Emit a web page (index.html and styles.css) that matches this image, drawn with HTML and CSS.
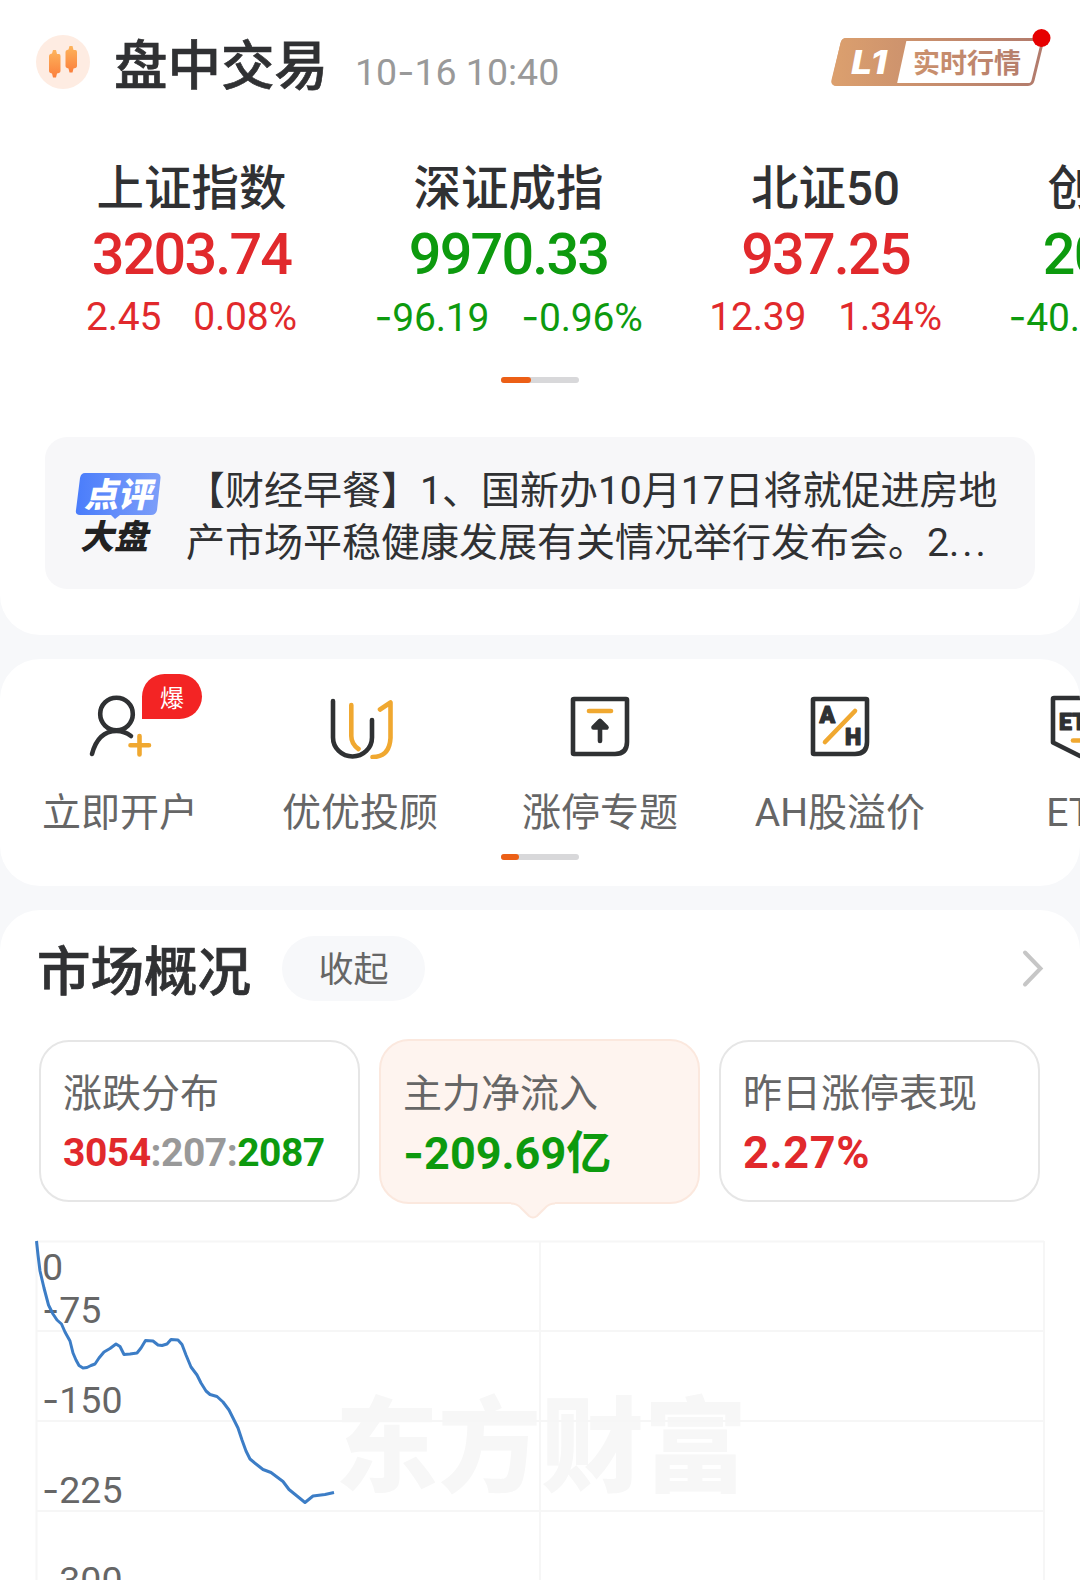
FILE: index.html
```
<!DOCTYPE html>
<html lang="zh-CN">
<head>
  <meta charset="UTF-8">
  <title>盘中交易</title>
  <link rel="stylesheet" href="styles.css">
</head>
<body>

  <section class="panel panel-top">
    <header class="header">
      <svg class="logo" width="54" height="54" viewBox="0 0 54 54">
        <defs>
          <linearGradient id="candle" x1="0" y1="0" x2="0" y2="1">
            <stop offset="0" stop-color="#fdb45c"/>
            <stop offset="1" stop-color="#fb7f3c"/>
          </linearGradient>
        </defs>
        <circle cx="27" cy="27" r="27" fill="#feece2"/>
        <path d="M17 15h3l1 4h2q1.500 0 1.500 2v15q0 1.500-1.500 2l-2 .5-1 4h-3l-1-4-1.500-.5q-1.500-.5-1.500-2v-15q0-1.500 1.500-2l1.500-.5z" fill="url(#candle)"/>
        <path d="M33.500 11h3l1 4h2q1.500 0 1.500 2v14q0 1.500-1.500 2l-2 .5-1 4h-3l-1-4-1.500-.5q-1.500-.5-1.500-2v-14q0-1.500 1.500-2l1.500-.5z" fill="url(#candle)"/>
      </svg>
      <h1>盘中交易</h1>
      <span class="time">10<i class="neg">-</i>16 10:40</span>
      <svg class="level" width="224" height="66" viewBox="0 0 224 66">
        <defs>
          <linearGradient id="copper" gradientUnits="userSpaceOnUse" x1="0" y1="0" x2="214" y2="0">
            <stop offset="0" stop-color="#dca06e"/>
            <stop offset="1" stop-color="#b17a6c"/>
          </linearGradient>
        </defs>
        <path d="M15 18.500H208q4 0 3 4L202 59.500q-1 4-5 4H6q-5 0-4-4.500L11 22.500q1-4 5-4z" fill="none" stroke="url(#copper)" stroke-width="3"/>
        <path d="M15 17H76L65.500 65H6q-6.500 0-5-6L9.500 22q1-5 5.500-5z" fill="url(#copper)"/>
        <text class="l1" x="20" y="53" textLength="36" lengthAdjust="spacingAndGlyphs">L1</text>
        <text class="l1-name" x="82" y="52" fill="url(#copper)">实时行情</text>
        <circle cx="210.500" cy="17" r="9" fill="#e60000"/>
      </svg>
    </header>

    <div class="indices">
      <div class="index up">
        <h2>上证指数</h2>
        <b>3203.74</b>
        <p><span>2.45</span><span>0.08%</span></p>
      </div>
      <div class="index down">
        <h2>深证成指</h2>
        <b>9970.33</b>
        <p><span><i class="neg">-</i>96.19</span><span><i class="neg">-</i>0.96%</span></p>
      </div>
      <div class="index up">
        <h2>北证50</h2>
        <b>937.25</b>
        <p><span>12.39</span><span>1.34%</span></p>
      </div>
      <div class="index down">
        <h2>创业板指</h2>
        <b>2060.15</b>
        <p><span><i class="neg">-</i>40.06</span><span><i class="neg">-</i>1.91%</span></p>
      </div>
    </div>
    <div class="pager"><i class="pager-wide"></i></div>

    <div class="news">
      <svg class="news-logo" width="86" height="86" viewBox="0 0 86 86">
        <defs>
          <linearGradient id="blue" x1="0" y1="0" x2="1" y2="0">
            <stop offset="0" stop-color="#4a7dfb"/>
            <stop offset="1" stop-color="#7d9ef9"/>
          </linearGradient>
        </defs>
        <path d="M10 1H80q6 0 5.500 5L82 38q-1 5-6 5H45l-5 4-4-4H5q-5 0-4-5L5 6q1-5 5-5z" fill="url(#blue)"/>
        <text transform="translate(9 35) skewX(-12)" fill="#fff">点评</text>
        <text transform="translate(5 77) skewX(-12)" fill="#222">大盘</text>
      </svg>
      <p>【财经早餐】1、国新办10月17日将就促进房地<br>产市场平稳健康发展有关情况举行发布会。2<span class="dots">...</span></p>
    </div>
  </section>

  <section class="panel panel-tools">
    <div class="tools">
      <div class="tool">
        <svg width="66" height="66" viewBox="0 0 66 66">
          <circle cx="29.500" cy="21" r="16.300"/>
          <path d="M5 61C9 46 17 38 29.500 38q8 0 14.500 5"/>
          <path class="gold" d="M52.500 43v18.500M43.500 52.300h18.500"/>
        </svg>
        <span class="hot">爆</span>
        <span>立即开户</span>
      </div>
      <div class="tool">
        <svg width="66" height="66" viewBox="0 0 66 66">
          <path d="M6 8V44.500a19.500 19 0 0 0 39 0V27"/>
          <path class="gold" d="M24.300 12V43q0 8 7.200 13M53 16.500L63.500 9.500V45q-1 19-18 19"/>
        </svg>
        <span>优优投顾</span>
      </div>
      <div class="tool">
        <svg width="66" height="66" viewBox="0 0 66 66">
          <path d="M7 6H59q1 0 1 1V49q0 12-12 12H7q-1 0-1-1V7q0-1 1-1z"/>
          <path class="gold" d="M22 18h22"/>
          <path d="M33 48V29"/>
          <path d="M26.500 34.500L33 28l6.500 6.500z" fill="#2f3133"/>
        </svg>
        <span>涨停专题</span>
      </div>
      <div class="tool">
        <svg width="66" height="66" viewBox="0 0 66 66">
          <path d="M7 6H59q1 0 1 1V49q0 12-12 12H7q-1 0-1-1V7q0-1 1-1z"/>
          <path class="gold" d="M18 49L48 18"/>
          <text x="12.500" y="30">A</text>
          <text x="38" y="52">H</text>
        </svg>
        <span>AH股溢价</span>
      </div>
      <div class="tool">
        <svg width="66" height="66" viewBox="0 0 66 66">
          <path d="M7 5H59q1 0 1 1V50L33 63 6 49.500V6q0-1 1-1z"/>
          <text x="12" y="37">ETF</text>
          <path class="gold" d="M26 47.500h15"/>
        </svg>
        <span>ETF</span>
      </div>
    </div>
    <div class="pager"><i class="pager-narrow"></i></div>
  </section>

  <section class="panel panel-market">
    <div class="market-head">
      <h1>市场概况</h1>
      <span class="fold">收起</span>
      <svg class="chevron" width="24" height="40" viewBox="0 0 24 40">
        <path d="M4 4.500L19.500 20.500 4 36.500" fill="none" stroke="#c6c6c6" stroke-width="4" stroke-linecap="round"/>
      </svg>
    </div>

    <div class="cards">
      <div class="card">
        <h3>涨跌分布</h3>
        <p class="ratio"><span class="up">3054</span>:207:<span class="down">2087</span></p>
      </div>
      <div class="card active">
        <h3>主力净流入</h3>
        <p class="down"><i class="neg">-</i>209.69亿</p>
        <svg class="tail" width="44" height="17" viewBox="0 0 44 17">
          <path d="M0 0h44v2q-6 0-10 4l-8 8q-4 3-8 0L10 6Q6 2 0 2z" fill="#fef4ef"/>
          <path d="M0 1.500q6 0 10 4.500l8 8q4 3 8 0l8-8q4-4.500 10-4.500" fill="none" stroke="#fbe8de" stroke-width="2"/>
        </svg>
      </div>
      <div class="card">
        <h3>昨日涨停表现</h3>
        <p class="up rate">2.27%</p>
      </div>
    </div>

    <svg class="chart" width="1080" height="370" viewBox="0 0 1080 370">
      <text class="watermark" x="335" y="274">东方财富</text>
      <path class="grid" d="M36 31.500H1044M36 121H1044M36 211H1044M36 301H1044M36.500 31V370M540 31V370M1044 31V370"/>
      <g class="axis">
        <text x="42" y="70">0</text>
        <text x="42" y="112.500"><tspan class="neg">-</tspan>75</text>
        <text x="42" y="202.500"><tspan class="neg">-</tspan>150</text>
        <text x="42" y="292.500"><tspan class="neg">-</tspan>225</text>
        <text x="42" y="383"><tspan class="neg">-</tspan>300</text>
      </g>
      <polyline class="flow" points="36.500,31 38,45 40,61 44,78 48.500,95 53,104 57,110 61.500,114 65,122 70,131 73,143 76,150 79,155.500 83,158 87,157.500 91,155.500 95,154 99,148 104,142 110,138.500 116,134 120,136.500 124,144.500 130,144 137,143 141,138 145.500,130.500 153,131 158,135 162,135.500 167,134 171,129.500 178,130 182,134.500 186,145 191,157 197,165 201,173 206,181 210,184.500 217,186.500 223,192 229,200 234,210 238,218 242,230 246,241 250,249 256,254 263,259.500 271,262.500 277,267 283,271.500 289,279.500 297,286 305,292.500 313,286 325,284.500 334,282.500"/>
    </svg>
  </section>

</body>
</html>
```
FILE: styles.css
```
* {
  box-sizing: border-box;
  margin: 0;
  padding: 0;
}
body {
  width: 1080px;
  height: 1580px;
  overflow: hidden;
  background: #f7f8fa;
  color: #303133;
  font-family: Roboto, "Noto Sans CJK SC", sans-serif;
}
i { font-style: normal; }
svg { display: block; }
h1, h2, h3 { font-weight: 500; }
.neg { font-family: Inter, sans-serif; }
.up { color: #e1292c; }
.down { color: #0d9a0e; }

.panel {
  background: #fff;
  overflow: hidden;
}
.panel-top {
  height: 635px;
  border-radius: 0 0 40px 40px;
}
.panel-tools {
  height: 227px;
  margin: 24px 0;
  border-radius: 40px;
}
.panel-market {
  height: 670px;
  border-radius: 40px 40px 0 0;
}

/* header */
.header {
  display: flex;
  align-items: center;
  height: 124px;
  padding: 0 25px 0 36px;
}
.header h1,
.market-head h1 {
  font-size: 53.5px;
  line-height: 60px;
  -webkit-text-stroke: 0.7px #303133;
}
.header h1 {
  margin-left: 24px;
  padding-top: 10px;
}
.time {
  margin: 18px 0 0 27px;
  color: #999;
  font-size: 37.5px;
}
.level {
  margin: -16px 0 0 auto;
}
.l1 {
  fill: #fff;
  font: italic 800 33px Inter, sans-serif;
}
.l1-name {
  font-size: 27px;
  font-weight: 700;
}

/* index quotes */
.indices {
  display: flex;
  width: 1400px;
  padding: 35px 0 0 33px;
}
.index {
  width: 317px;
  text-align: center;
}
.index h2 {
  color: #303133;
  font-size: 47.5px;
  line-height: 60px;
}
.index b {
  display: block;
  margin: 8px 0 14px;
  font-size: 57.5px;
  font-weight: 500;
  letter-spacing: -1.8px;
  line-height: 56px;
}
.index p {
  display: flex;
  justify-content: center;
  gap: 32px;
  font-size: 39px;
  letter-spacing: -0.2px;
  line-height: 40px;
}
.pager {
  width: 78px;
  height: 6px;
  margin: 39px auto 0;
  border-radius: 3px;
  background: #d8d8da;
}
.pager i {
  display: block;
  height: 6px;
  border-radius: 3px;
  background: #ec5f16;
}
.pager-wide { width: 30px; }
.pager-narrow { width: 18px; }

/* news */
.news {
  display: flex;
  width: 990px;
  height: 152px;
  margin: 54px 0 0 45px;
  padding: 28px 0 0 30px;
  border-radius: 22px;
  background: #f7f7f9;
}
.news-logo { margin-top: 7px; }
.news-logo text {
  font-size: 34px;
  font-weight: 900;
}
.news p {
  margin-left: 25px;
  font-size: 39px;
  line-height: 52px;
  white-space: nowrap;
}
.dots { letter-spacing: 3px; }

/* tool entries */
.tools {
  display: flex;
  width: 1200px;
  padding-top: 34px;
}
.tool {
  position: relative;
  display: flex;
  flex-direction: column;
  align-items: center;
  gap: 29px;
  width: 240px;
  color: #666;
  font-size: 39px;
  line-height: 50px;
}
.tool svg {
  fill: none;
  stroke: #2f3133;
  stroke-width: 4.6;
  stroke-linecap: round;
  stroke-linejoin: round;
}
.tool svg .gold { stroke: #f0a830; }
.tool svg text {
  fill: #2f3133;
  stroke-width: 1.2;
  font: 900 23px Roboto, sans-serif;
}
.hot {
  position: absolute;
  left: 142px;
  top: -19px;
  width: 60px;
  height: 45px;
  border-radius: 23px 23px 23px 0;
  background: #f32424;
  color: #fff;
  font-size: 24px;
  line-height: 50px;
  text-align: center;
}
.panel-tools .pager { margin-top: 16px; }

/* market overview */
.market-head {
  display: flex;
  align-items: center;
  height: 116px;
  padding: 0 35px 0 37px;
}
.market-head h1 { padding-top: 10px; }
.fold {
  width: 143px;
  height: 65px;
  margin-left: 31px;
  border-radius: 33px;
  background: #f7f8fa;
  color: #666;
  font-size: 35px;
  line-height: 70px;
  text-align: center;
}
.chevron { margin-left: auto; }
.cards {
  display: flex;
  align-items: center;
  gap: 19px;
  height: 164px;
  margin: 13px 39px 0;
}
.card {
  position: relative;
  width: 321px;
  height: 162px;
  padding: 27px 0 0 22px;
  border: 2px solid #e6e6e6;
  border-radius: 30px;
  font-size: 45px;
  font-weight: 700;
  white-space: nowrap;
}
.card h3 {
  color: #666;
  font-size: 39px;
  font-weight: 400;
  line-height: 50px;
}
.card p {
  margin-top: 6px;
  line-height: 56px;
}
.card .ratio {
  color: #999;
  font-size: 39px;
  letter-spacing: -0.5px;
}
.card .rate { letter-spacing: 0.7px; }
.card.active {
  height: 165px;
  padding-top: 28px;
  background: #fef4ef;
  border-color: #fbe8de;
}
.tail {
  position: absolute;
  left: 130px;
  bottom: -17px;
}
.chart { margin-top: 7px; }
.grid {
  fill: none;
  stroke: #f6f6f6;
  stroke-width: 2;
}
.axis {
  fill: #666;
  font-size: 37.5px;
}
.watermark {
  fill: #f7f7f7;
  font-size: 103px;
  font-weight: 900;
}
.flow {
  fill: none;
  stroke: #3c7dc6;
  stroke-width: 3;
  stroke-linejoin: round;
}
```
